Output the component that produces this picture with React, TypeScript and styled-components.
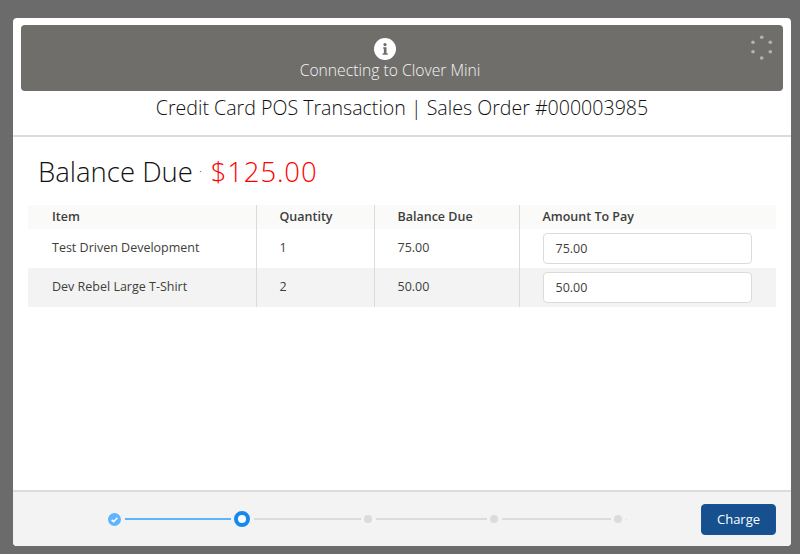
import React from "react";
import styled, { createGlobalStyle } from "styled-components";

const Global = createGlobalStyle`
  html, body { margin: 0; padding: 0; height: 100%; background: #6b6b6b; }
  body { font-family: "Open Sans", "Liberation Sans", sans-serif; color: #16325c; overflow: hidden; }
  * { box-sizing: border-box; }
`;
const Page = styled.div`
  width: 800px; height: 554px; padding: 18px 9px 8px 13px; background: #6b6b6b;
`;
const Modal = styled.div`
  width: 778px; height: 528px; background: #fff; border-radius: 4px; overflow: hidden;
  display: flex; flex-direction: column;
`;
const Header = styled.header`
  height: 119px; padding: 7px 8px 0; border-bottom: 2px solid #dcdcdc; flex: none;
`;
const Banner = styled.div`
  position: relative; height: 66px; background: #706e6b; border-radius: 4px; color: #fff;
  display: flex; flex-direction: column; align-items: center; padding: 13px 24px 0 0;
`;
const InfoBadge = styled.svg`
  width: 22px; height: 22px; display: block; margin-right: 10px;
`;
const BannerText = styled.div`
  font-size: 15.7px; line-height: 20px; margin-top: 0; font-weight: 300; color: #f4f4f4;
`;
const Spinner = styled.svg`
  position: absolute; top: 9px; right: 9px; width: 26px; height: 28px;
`;
const Title = styled.h2`
  margin: 4px 0 0; font-size: 19.6px; line-height: 26px; font-weight: 300; text-align: center; color: #111;
`;
const Main = styled.main`
  flex: 1; padding: 0 15px;
`;
const Balance = styled.div`
  margin: 17px 0 0 10px; height: 36px; font-size: 27.5px; line-height: 36px; font-weight: 300; color: #111;
  display: flex; align-items: center;
`;
const Dot = styled.span`
  font-size: 12px; margin: 0 9px 0 6px; color: #16325c;
`;
const Amount = styled.span`
  color: #ff0000; letter-spacing: 0.85px;
`;
const Table = styled.table`
  margin-top: 14.5px; width: 748px; border-collapse: collapse; table-layout: fixed; font-size: 12.5px; color: #3e3e3c;
`;
const HeadCell = styled.th<{ $w: number; $pl: number }>`
  width: ${(p) => p.$w}px; height: 24px; padding: 0 0 0 ${(p) => p.$pl}px; text-align: left; font-weight: 600;
  background: #fafaf9; border-left: 1px solid #dddbda;
  &:first-child { border-left: 0; }
`;
const Row = styled.tr<{ $alt?: boolean }>`
  background: ${(p) => (p.$alt ? "#f3f3f3" : "#fff")};
`;
const Cell = styled.td<{ $pl: number }>`
  height: 39px; padding: 0 0 1px ${(p) => p.$pl}px; border-left: 1px solid #dddbda;
  &:first-child { border-left: 0; }
`;
const AmountInput = styled.input`
  display: block; width: 209px; height: 30.5px; margin-top: 2px; padding: 0 12px; border: 1px solid #dddbda; border-radius: 4px;
  background: #fff; font: inherit; color: #3e3e3c; outline: none;
`;
const Footer = styled.footer`
  height: 56px; flex: none; background: #f3f3f3; border-top: 2px solid #dcdcdc;
  display: flex; align-items: center; padding: 0 15px 0 95px;
`;
const Steps = styled.div`
  width: 530px; display: flex; align-items: center;
`;
const DoneStep = styled.svg`
  width: 13px; height: 13px; flex: none;
`;
const CurrentStep = styled.span`
  width: 16px; height: 16px; border-radius: 50%; background: #fff; border: 4px solid #1589ee; flex: none;
`;
const Step = styled.span`
  width: 8px; height: 8px; border-radius: 50%; background: #dddbda; flex: none;
`;
const Tail = styled.span`
  width: 1px; height: 1px; margin-left: 4px; background: #dddbda; flex: none;
`;
const Line = styled.span<{ $w: number; $done?: boolean }>`
  width: ${(p) => p.$w}px; height: 2px; margin: 0 3.5px; flex: none;
  background: ${(p) => (p.$done ? "#5eb4ff" : "#dddbda")};
`;
const Charge = styled.button`
  margin-left: auto; width: 75px; height: 31px; border: 1px solid #1b5297; border-radius: 4px; background: #16508f;
  color: #fff; font: inherit; font-size: 13px; padding: 0;
`;

const spinnerDots = [[13.7, 3.3], [22.3, 8.3], [22.3, 17.7], [13.7, 24], [5, 17.7], [5, 8.3]];

export default function App() {
  return (
    <Page>
      <Global />
      <Modal>
        <Header>
          <Banner>
            <InfoBadge viewBox="0 0 22 22">
              <circle cx="11" cy="11" r="11" fill="#fff" />
              <path d="M9.2 9.3h3.3v6h1.2v1.4H8.6v-1.4h1.3v-4.6h-.7z" fill="#706e6b" />
              <circle cx="11" cy="6.6" r="1.6" fill="#706e6b" />
            </InfoBadge>
            <BannerText>Connecting to Clover Mini</BannerText>
            <Spinner viewBox="0 0 26 28">
              {spinnerDots.map(([cx, cy]) => (
                <circle key={`${cx}-${cy}`} cx={cx} cy={cy} r="1.8" fill="#b4b3b0" />
              ))}
            </Spinner>
          </Banner>
          <Title>Credit Card POS Transaction | Sales Order #000003985</Title>
        </Header>
        <Main>
          <Balance>
            Balance Due<Dot>·</Dot>
            <Amount>$125.00</Amount>
          </Balance>
          <Table>
            <thead>
              <tr>
                <HeadCell $w={228} $pl={24}>Item</HeadCell>
                <HeadCell $w={118} $pl={23}>Quantity</HeadCell>
                <HeadCell $w={145} $pl={23}>Balance Due</HeadCell>
                <HeadCell $w={257} $pl={23}>Amount To Pay</HeadCell>
              </tr>
            </thead>
            <tbody>
              <Row>
                <Cell $pl={24}>Test Driven Development</Cell>
                <Cell $pl={23}>1</Cell>
                <Cell $pl={23}>75.00</Cell>
                <Cell $pl={23}><AmountInput defaultValue="75.00" /></Cell>
              </Row>
              <Row $alt>
                <Cell $pl={24}>Dev Rebel Large T-Shirt</Cell>
                <Cell $pl={23}>2</Cell>
                <Cell $pl={23}>50.00</Cell>
                <Cell $pl={23}><AmountInput defaultValue="50.00" /></Cell>
              </Row>
            </tbody>
          </Table>
        </Main>
        <Footer>
          <Steps>
            <DoneStep viewBox="0 0 13 13">
              <circle cx="6.5" cy="6.5" r="6.5" fill="#5eb4ff" />
              <path d="M3.6 6.8l2 1.9 3.8-4" fill="none" stroke="#fff" strokeWidth="1.6" />
            </DoneStep>
            <Line $w={106} $done />
            <CurrentStep />
            <Line $w={107} />
            <Step />
            <Line $w={111} />
            <Step />
            <Line $w={109} />
            <Step />
            <Tail />
          </Steps>
          <Charge>Charge</Charge>
        </Footer>
      </Modal>
    </Page>
  );
}
